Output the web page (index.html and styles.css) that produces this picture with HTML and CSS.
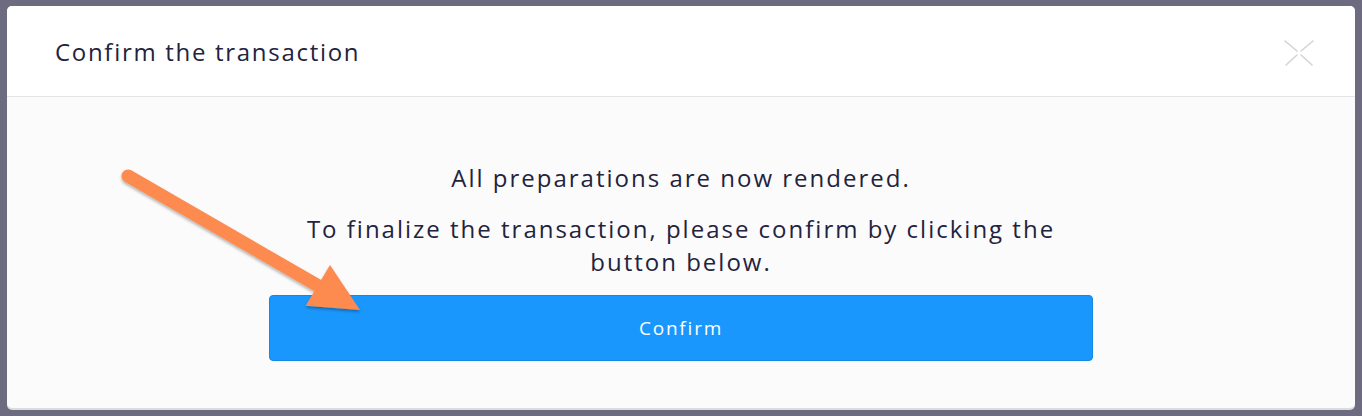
FILE: index.html
```html
<!DOCTYPE html>
<html>
<head>
<meta charset="utf-8">
<link rel="stylesheet" href="styles.css">
</head>
<body>
<div class="modal">
  <div class="modal-header">
    <h1 class="modal-title">Confirm the transaction</h1>
    <button class="close" aria-label="Close">
      <svg width="32" height="30" viewBox="0 0 32 30">
        <g stroke="#d4d4d6" stroke-width="1.6" stroke-linecap="round" fill="none">
          <line x1="2" y1="3" x2="14" y2="13"/>
          <line x1="30" y1="3" x2="18" y2="13"/>
          <line x1="3" y1="27" x2="14" y2="17"/>
          <line x1="29" y1="27" x2="18" y2="17"/>
        </g>
      </svg>
    </button>
  </div>
  <div class="modal-body">
    <p class="lead">All preparations are now rendered.</p>
    <p class="lead wide">To finalize the transaction, please confirm by clicking the button below.</p>
    <button class="btn-confirm">Confirm</button>
    <svg class="arrow" width="300" height="200" viewBox="0 0 300 200">
      <defs>
        <filter id="sh" x="-20%" y="-20%" width="140%" height="140%">
          <feDropShadow dx="0" dy="2" stdDeviation="1.5" flood-color="#000" flood-opacity="0.3"/>
        </filter>
      </defs>
      <g filter="url(#sh)">
        <line x1="28" y1="26" x2="222" y2="138" stroke="#fd8a4f" stroke-width="13" stroke-linecap="round"/>
        <polygon fill="#fd8a4f" points="205.7,155.7 230,115 260,160"/>
      </g>
    </svg>
  </div>
</div>
</body>
</html>
```
FILE: styles.css
```css
html, body {
  margin: 0;
  padding: 0;
}
body {
  background: #6d6b7f;
  width: 1362px;
  height: 416px;
  padding: 6px 0 0 7px;
  box-sizing: border-box;
  font-family: "Open Sans", "Lato", sans-serif;
  color: #23233d;
}
.modal {
  width: 1348px;
  height: 402px;
  background: #fbfbfc;
  border-radius: 5px;
  box-shadow: 0 2px 0 #dcdce0;
  overflow: hidden;
  display: flex;
  flex-direction: column;
}
.modal-header {
  height: 90px;
  background: #ffffff;
  border-bottom: 1px solid #e4e4e8;
  display: flex;
  align-items: center;
  justify-content: space-between;
  padding: 0 40px 0 48px;
  box-sizing: content-box;
}
.modal-title {
  margin: 0;
  font-size: 24px;
  font-weight: 400;
  letter-spacing: 1.7px;
  color: #23233d;
}
.close {
  border: 0;
  background: none;
  padding: 0;
  width: 32px;
  height: 30px;
  margin-top: 4px;
  display: block;
}
.modal-body {
  position: relative;
  flex: 1;
  display: flex;
  flex-direction: column;
  align-items: center;
  padding-top: 64px;
}
.lead {
  margin: 0 0 18px;
  font-size: 24px;
  font-weight: 500;
  line-height: 33px;
  letter-spacing: 2px;
  text-align: center;
  max-width: 800px;
}
.lead.wide {
  margin-bottom: 17px;
}
.btn-confirm {
  width: 824px;
  height: 66px;
  background: #1a97fd;
  border: 1px solid #1389e6;
  border-radius: 4px;
  color: #ffffff;
  font-family: "Open Sans", "Lato", sans-serif;
  font-size: 19px;
  font-weight: 500;
  letter-spacing: 1.8px;
}
.arrow {
  position: absolute;
  left: 93px;
  top: 53px;
  overflow: visible;
}
```
